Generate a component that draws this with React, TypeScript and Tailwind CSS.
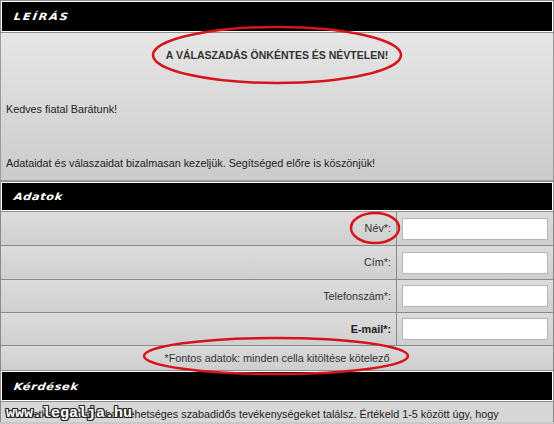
import React from "react";

const titleFont = {
  fontFamily: '"DejaVu Sans", Verdana, sans-serif',
};

function SectionBar({ title, upper = false, h }: { title: string; upper?: boolean; h: string }) {
  return (
    <div className="border border-[#8e8e8e]">
      <div className={`flex ${h} items-center border border-white bg-black px-3`}>
        <span
          className={`text-[10px] font-bold italic text-white ${upper ? "tracking-[1.5px]" : "tracking-[0.5px]"}`}
          style={{ ...titleFont, transform: "skewX(-8deg) scaleX(1.15)", transformOrigin: "left" }}
        >
          {title}
        </span>
      </div>
    </div>
  );
}

function FieldRow({ label, bold = false, h }: { label: string; bold?: boolean; h: string }) {
  return (
    <div className={`flex ${h} border-b border-[#8a8a8a]`}>
      <div
        className={`flex flex-1 items-center justify-end border-r border-[#8a8a8a] bg-gradient-to-b from-[#dcdcdc] to-[#cfcfcf] pr-[5px] text-[10.8px] ${bold ? "font-bold text-[#222]" : "text-[#333]"}`}
      >
        {label}
      </div>
      <div className="flex w-[156px] items-center bg-gradient-to-b from-[#dcdcdc] to-[#cfcfcf] pl-[5px]">
        <div className="h-[22px] w-[146px] border border-[#a9b8c6] bg-white" />
      </div>
    </div>
  );
}

export default function App() {
  return (
    <div
      className="relative h-[424px] w-[554px] overflow-hidden bg-[#c9c9c9]"
      style={{ fontFamily: '"Liberation Sans", Arial, sans-serif' }}
    >
      <SectionBar title="LEÍRÁS" upper h="h-[31px]" />

      <div className="flex h-[148px] flex-col border-x border-b border-[#9a9a9a] bg-gradient-to-b from-[#e6e6e6] to-[#cbcbcb] px-[5px]">
        <div className="mt-[15px] text-center text-[10.5px] font-bold text-[#333]">
          A VÁLASZADÁS ÖNKÉNTES ÉS NÉVTELEN!
        </div>
        <div className="mt-[37px] text-[10.8px] text-[#222]">Kedves fiatal Barátunk!</div>
        <div className="mt-[38px] text-[10.8px] text-[#222]">
          Adataidat és válaszaidat bizalmasan kezeljük. Segítséged előre is köszönjük!
        </div>
      </div>

      <SectionBar title="Adatok" h="h-[29px]" />

      <div className="border-x border-[#8a8a8a]">
        <FieldRow label="Név*:" h="h-[34px]" />
        <FieldRow label="Cím*:" h="h-[34px]" />
        <FieldRow label="Telefonszám*:" h="h-[33px]" />
        <FieldRow label="E-mail*:" bold h="h-[33px]" />
        <div className="flex h-[24px] items-center justify-center bg-gradient-to-b from-[#dadada] to-[#cecece] text-[10.8px] text-[#333]">
          *Fontos adatok: minden cella kitöltése kötelező
        </div>
      </div>

      <SectionBar title="Kérdések" h="h-[30px]" />

      <div className="border-x border-[#8a8a8a] bg-[#d6d6d6] px-[5px] pt-[4px] text-[10.8px] text-[#222]">
        A következő táblázatban lehetséges szabadidős tevékenységeket találsz. Értékeld 1-5 között úgy, hogy
      </div>

      <div
        className="absolute left-[6px] top-[403px] text-[15px] font-bold tracking-[0px] text-white"
        style={{
          fontFamily: '"Liberation Mono", "DejaVu Sans Mono", monospace',
          textShadow:
            "1px 0 0 #222, -1px 0 0 #222, 0 1px 0 #222, 0 -1px 0 #222, 1px 1px 0 #222, -1px -1px 0 #222, 1px -1px 0 #222, -1px 1px 0 #222",
        }}
      >
        www.legalja.hu
      </div>

      <svg className="pointer-events-none absolute left-0 top-0" width="554" height="424">
        <g fill="none" stroke="#d7141a" strokeWidth="2.5">
          <ellipse cx="277" cy="55" rx="124" ry="28" />
          <ellipse cx="375" cy="228" rx="24" ry="15" />
          <ellipse cx="276" cy="356" rx="132" ry="18" />
        </g>
      </svg>
    </div>
  );
}
